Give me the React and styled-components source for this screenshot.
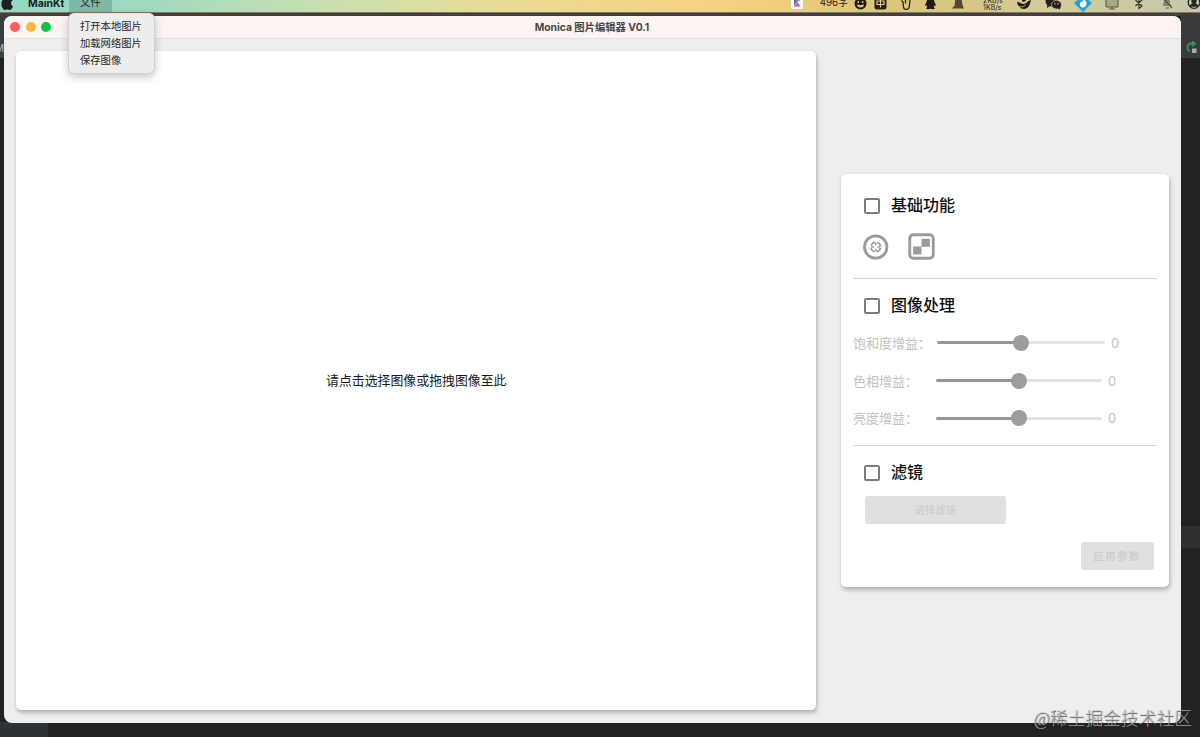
import React, { useState } from 'react';
import styled, { createGlobalStyle } from 'styled-components';

const GlobalStyle = createGlobalStyle`
  * {
    box-sizing: border-box;
  }
  body {
    margin: 0;
    overflow: hidden;
    font-family: Inter, "Noto Sans CJK SC", sans-serif;
  }
`;

const Desktop = styled.div`
  position: relative;
  width: 1200px;
  height: 737px;
  overflow: hidden;
  background:
    linear-gradient(#393a3c, #393a3c) 1181px 12px / 19px 46px no-repeat,
    linear-gradient(#2e3032, #2e3032) 1181px 526px / 19px 22px no-repeat,
    linear-gradient(#2f3436, #2b2f31) 0 722px / 48px 15px no-repeat,
    linear-gradient(#404042, #404042) 0 12px / 1200px 4px no-repeat,
    linear-gradient(#3c3d3f, #3c3d3f) 0 16px / 20px 42px no-repeat,
    #222222;
`;

const MenuBar = styled.div`
  display: flex;
  align-items: center;
  justify-content: space-between;
  height: 24px;
  margin-top: -12px;
  padding-top: 6px;
  background: linear-gradient(
    90deg,
    #91d8c4 0,
    #a2dbbf 160px,
    #bfdfb5 280px,
    #d8dfa5 400px,
    #ecda92 530px,
    #f5d384 700px,
    #eecf7c 780px,
    #dfc67b 860px,
    #d8c784 960px,
    #d2cc9c 1060px,
    #c4c8aa 1200px
  );
  box-shadow: 0 1px 0 #80755f;
  color: #1b1d1a;
`;

const AppMenus = styled.div`
  display: flex;
  align-items: center;
  height: 18px;
  padding-left: 1px;
  font-size: 10.4px;
`;

const AppName = styled.span`
  width: 56px;
  padding-left: 15px;
  font-weight: 700;
  white-space: nowrap;
`;

const MenuTitle = styled.span`
  display: flex;
  justify-content: center;
  width: 43px;
  height: 18px;
  line-height: 17px;
  background: #7fb9a6;
`;

const StatusItems = styled.div`
  display: grid;
  grid-template-columns: 26px 40px 20px 20px 32px 16px 40px 30px 32px 26px 34px 24px 30px 26px 28px;
  width: 416px;
  justify-items: center;
  align-items: center;
  font-size: 10px;

  svg {
    display: block;
  }
`;

const WordCount = styled.span`
  justify-self: end;
  padding-right: 2px;
  font-size: 9.8px;
  line-height: 14px;
  white-space: nowrap;
`;

const NetSpeed = styled.span`
  font-size: 7px;
  line-height: 7px;
  padding-top: 1px;
  white-space: nowrap;
`;

const DropMenu = styled.div`
  position: absolute;
  top: 13px;
  left: 68px;
  z-index: 3;
  display: flex;
  flex-direction: column;
  width: 87px;
  height: 61px;
  padding: 4px 11px;
  border: 1px solid #d0d0d0;
  border-top-color: #e4e4e4;
  border-radius: 6px;
  background: #ededed;
  box-shadow: 0 3px 9px rgba(0, 0, 0, 0.22);
`;

const DropItem = styled.div`
  height: 17.4px;
  color: #262626;
  font-size: 10.3px;
  line-height: 17px;
  white-space: nowrap;
`;

const Window = styled.div`
  position: absolute;
  top: 16px;
  left: 4px;
  display: flex;
  flex-direction: column;
  width: 1177px;
  height: 707px;
  border-radius: 8px;
  overflow: hidden;
  background: #eeeeee;
`;

const TitleBar = styled.div`
  display: grid;
  grid-template-columns: 1fr auto 1fr;
  align-items: center;
  height: 23px;
  padding-left: 6px;
  padding-right: 7px;
  border-bottom: 1px solid #e2dfdc;
  background: #fbf4f1;
`;

const Lights = styled.div`
  display: flex;
  gap: 5.7px;
`;

const Light = styled.span`
  width: 10px;
  height: 10px;
  border-radius: 50%;
  background: ${({ $color }) => $color};
`;

const Title = styled.span`
  color: #4b4745;
  font-size: 10.3px;
  font-weight: 700;
  line-height: 14px;
  white-space: nowrap;
`;

const Content = styled.div`
  display: flex;
  flex: 1;
  align-items: flex-start;
  gap: 25px;
  padding: 12px 12px 12px;
`;

const Card = styled.div`
  border-radius: 5px;
  background: #ffffff;
  box-shadow: 1px 3px 4px rgba(0, 0, 0, 0.25), 0 0 2px rgba(0, 0, 0, 0.08);
`;

const Canvas = styled(Card)`
  display: flex;
  align-items: center;
  justify-content: center;
  width: 799.5px;
  height: 659px;
  padding: 0 0 2px 1px;
  color: #1a1a1a;
  font-size: 12.9px;
`;

const Panel = styled(Card)`
  display: flex;
  flex-direction: column;
  width: 328px;
  height: 413px;
  margin-top: 123px;
  padding: 0 12px 0 12.5px;
`;

const Section = styled.section`
  height: ${({ $height }) => $height}px;
  padding-top: ${({ $top }) => $top}px;
  border-bottom: ${({ $last }) => ($last ? 'none' : '1px solid #d5d5d5')};
`;

const CheckRow = styled.label`
  display: flex;
  align-items: center;
  gap: 11px;
  height: 24px;
  padding-left: 11px;
  color: #111111;
  font-size: 16px;
  font-weight: 500;
`;

const CheckText = styled.span`
  padding-bottom: 2px;
`;

const Box = styled.input`
  appearance: none;
  width: 16px;
  height: 16px;
  margin: 1px 0 0;
  border: 2px solid #7c7c7c;
  border-radius: 2px;
  background: #ffffff;

  &:checked {
    background: #6a6a6a;
  }
`;

const Tools = styled.div`
  display: flex;
  align-items: center;
  gap: 18.5px;
  padding: 16px 0 0 10px;

  svg {
    display: block;
  }
`;

const SliderList = styled.div`
  padding-top: 7px;
`;

const SliderRow = styled.div`
  display: flex;
  align-items: center;
  height: 37.7px;
  color: #c2c2c2;
  font-size: 13px;
`;

const SliderLabel = styled.span`
  width: ${({ $wide }) => ($wide ? 84 : 83)}px;
  padding-bottom: 1px;
  white-space: nowrap;
`;

const Track = styled.div`
  position: relative;
  width: ${({ $wide }) => ($wide ? 168 : 166)}px;
  height: 3px;
  margin-right: 6px;
  border-radius: 2px;
  background: linear-gradient(90deg, #979797 50%, #e2e2e2 50%);
`;

const Thumb = styled.span`
  position: absolute;
  top: -6.5px;
  left: calc(50% - 8px);
  width: 16px;
  height: 16px;
  border-radius: 50%;
  background: #9d9d9d;
`;

const DisabledButton = styled.button`
  display: block;
  width: ${({ $width }) => $width}px;
  height: 28px;
  padding: 0 0 2px;
  border: none;
  border-radius: 3px;
  background: #e0e0e0;
  color: #cccccc;
  font-family: inherit;
  font-size: ${({ $size }) => $size}px;
  font-weight: 500;
  letter-spacing: ${({ $spacing }) => $spacing}px;
`;

const FilterBody = styled.div`
  padding: 12px 0 0 12px;
`;

const Footer = styled.div`
  display: flex;
  justify-content: flex-end;
  padding: 18px 3px 0 0;
`;

const Watermark = styled.div`
  position: absolute;
  right: 8px;
  bottom: 5px;
  z-index: 4;
  color: rgba(205, 205, 205, 0.72);
  font-family: "Liberation Serif", "Noto Sans CJK SC", serif;
  font-size: 17.8px;
  font-weight: 300;
  line-height: 26px;
  text-shadow: 0.5px 0.5px 1px rgba(40, 40, 40, 0.9);
  white-space: nowrap;
`;

const IdeText = styled.span`
  position: absolute;
  top: 42px;
  left: -5px;
  color: #bbbbbb;
  font-size: 10px;
`;

const RerunIcon = styled.svg`
  position: absolute;
  top: 41px;
  left: 1185px;
`;

const AppleIcon = () => (
  <svg width="12" height="15" viewBox="0 0 12 15" fill="#1c211f">
    <path d="M6 4C7 4 8 3 9.4 3c1 0 1.9.5 2.4 1.300C9.300 5.800 9.700 9.200 12 10.200 11.300 12.200 10 14 8.800 14 7.800 14 7.300 13.400 6.300 13.400S4.800 14 3.800 14C2.200 14 .4 11 .4 7.800.4 4.700 2 3 3.700 3 4.700 3 5.400 4 6 4Z" />
    <path d="M6 3C6 1.500 7.200.3 8.600.1 8.700 1.700 7.500 3 6 3Z" />
  </svg>
);

const StatusIcons = () => (
  <StatusItems>
    <svg width="14" height="16" viewBox="0 0 14 16">
      <rect x="1" y="1" width="12" height="13" rx="2" fill="#fff" />
      <path d="M4 3h6L4 11Z" fill="#4d75cf" />
      <path d="M4 11.500 7.500 7l3 4.500Z" fill="#d55278" />
      <path d="M7 7 10 3v3Z" fill="#f08b3e" />
    </svg>
    <WordCount>496字</WordCount>
    <svg width="13" height="13" viewBox="0 0 13 13">
      <circle cx="6.500" cy="6.500" r="6" fill="#1e1c14" />
      <circle cx="4.300" cy="5" r="1" fill="#d8c27a" />
      <circle cx="8.700" cy="5" r="1" fill="#d8c27a" />
      <path d="M3 7.300c1.500 1 5.500 1 7 0a3.500 3.300 0 0 1-7 0Z" fill="#d8c27a" />
    </svg>
    <svg width="13" height="13" viewBox="0 0 13 13">
      <rect x=".5" y="0" width="12" height="12.500" rx="2" fill="#24221a" />
      <path d="M3 4h7v3.500H3ZM6.500 2v8.500" fill="none" stroke="#dfcb87" strokeWidth="1.200" />
    </svg>
    <svg width="12" height="15" viewBox="0 0 12 15" fill="none" stroke="#24221a" strokeWidth="1.300">
      <path d="M1.500 4.500 3 6l.5 5c.4 3.400 5.400 3.200 5.800-.5L10.200 2M5.500 3v4.500" />
    </svg>
    <svg width="13" height="14" viewBox="0 0 13 14" fill="#1d1b15">
      <path d="M3 4c0-5 7-5 7 0 0 2 2 4 2 6l-1.500-.7-.7 2 1.200 1.200c-1 1-3 .7-4.500.3-1.500.4-3.500.700-4.500-.3l1.200-1.200-.7-2L1 10c0-2 2-4 2-6Z" />
    </svg>
    <svg width="14" height="14" viewBox="0 0 14 14" fill="#4d4933">
      <path d="M4.500 1 10 0l1.500 9 1.500 3.500H.5L3.500 10Z" />
    </svg>
    <NetSpeed>
      2KB/s
      <br />
      1KB/s
    </NetSpeed>
    <svg width="16" height="14" viewBox="0 0 16 14" fill="#1d1b15">
      <path d="M1 6c3 0 4 2 7 2 2 0 3-3 7-4-1 5-3 9-7 9-4 0-6-3-7-7Z" />
      <path d="M6 5c0-2 3-3 5-4 0 3-2 5-4 5Z" />
      <path d="M3 10.500c3 1 5 0 7-2" fill="none" stroke="#d5c98d" strokeWidth=".8" />
    </svg>
    <svg width="17" height="14" viewBox="0 0 17 14" fill="#25211a">
      <ellipse cx="6.500" cy="5.500" rx="6" ry="5" />
      <path d="m2 9 0 3 3-2Z" />
      <ellipse cx="11.500" cy="8.700" rx="5" ry="4.300" stroke="#d2cb98" strokeWidth=".7" />
      <path d="m12 12 3 1.500.5-3Z" />
      <circle cx="10" cy="7.700" r=".7" fill="#d2cb98" />
      <circle cx="13" cy="7.700" r=".7" fill="#d2cb98" />
    </svg>
    <svg width="18" height="17" viewBox="0 0 18 17">
      <path d="M9 0 18 8 9 17 0 8Z" fill="#22a1dc" />
      <path d="M9.500 2c0 3 3.500 4 3 7-.4 2.500-2 3.500-3.500 3.500-2 0-3.500-1.500-3-4 .2-1 .7-1.800 1.200-2.300L8 7.500c1-1.500 1.500-3.500 1.500-5.500Z" fill="#fff" />
    </svg>
    <svg width="14" height="13" viewBox="0 0 14 13" fill="#aaa985" stroke="#555746" strokeWidth="1.100">
      <rect x="1" y="0" width="12" height="10" rx="1" />
      <path d="M4 12h6M7 10v2" />
    </svg>
    <svg width="10" height="14" viewBox="0 0 10 14" fill="none" stroke="#30332c" strokeWidth="1.200">
      <path d="M1.500 4 8 10 5 12.500V1.500L8 4 1.500 10" />
    </svg>
    <svg width="13" height="14" viewBox="0 0 13 14">
      <path d="M3 4c0-4 6-4 6 0v4l2 2H2Z" fill="#81846e" />
      <path d="m2 2 9 10M5 12h3" stroke="#50534a" strokeWidth="1.200" />
    </svg>
    <svg width="14" height="14" viewBox="0 0 14 14" fill="none" stroke="#24271f" strokeWidth="1.300">
      <circle cx="7" cy="6.500" r="5.800" />
      <circle cx="7" cy="5" r="2" fill="#24271f" />
      <path d="M3.500 10c1-3 6-3 7 0Z" fill="#24271f" />
    </svg>
  </StatusItems>
);

const LensIcon = () => (
  <svg width="26" height="26" viewBox="0 0 26 26" fill="none" stroke="#9b9b9b">
    <circle cx="12.700" cy="13" r="11.200" strokeWidth="2.800" />
    <circle cx="12.700" cy="13" r="4.800" strokeWidth="1.600" strokeDasharray="5.540 2" strokeDashoffset="-1" />
    <path d="M12.700 8.500v2.800M12.700 14.700v2.800M8.200 13H11M14.400 13h2.800" strokeWidth="1.600" />
  </svg>
);

const MosaicIcon = () => (
  <svg width="27" height="27" viewBox="0 0 28 28" fill="#9b9b9b">
    <rect x="1.800" y="1.800" width="24.400" height="24.400" rx="3.800" fill="none" stroke="#9b9b9b" strokeWidth="3" />
    <rect x="14" y="6" width="8.700" height="8.300" />
    <rect x="5.300" y="14" width="8.700" height="8.300" />
  </svg>
);

const menuItems = ['打开本地图片', '加载网络图片', '保存图像'];

const sliders = [
  { label: '饱和度增益：', value: 0, wide: true },
  { label: '色相增益：', value: 0 },
  { label: '亮度增益：', value: 0 },
];

const CheckTitle = ({ children }) => {
  const [checked, setChecked] = useState(false);

  return (
    <CheckRow>
      <Box type="checkbox" checked={checked} onChange={(e) => setChecked(e.target.checked)} />
      <CheckText>{children}</CheckText>
    </CheckRow>
  );
};

const ControlPanel = () => (
  <Panel>
    <Section $height={105} $top={19}>
      <CheckTitle>基础功能</CheckTitle>
      <Tools>
        <LensIcon />
        <MosaicIcon />
      </Tools>
    </Section>
    <Section $height={167} $top={14}>
      <CheckTitle>图像处理</CheckTitle>
      <SliderList>
        {sliders.map(({ label, value, wide }) => (
          <SliderRow key={label}>
            <SliderLabel $wide={wide}>{label}</SliderLabel>
            <Track $wide={wide}>
              <Thumb />
            </Track>
            {value}
          </SliderRow>
        ))}
      </SliderList>
    </Section>
    <Section $height={140} $top={14} $last>
      <CheckTitle>滤镜</CheckTitle>
      <FilterBody>
        <DisabledButton disabled $width={141} $size={10} $spacing={0.2}>选择滤镜</DisabledButton>
      </FilterBody>
      <Footer>
        <DisabledButton disabled $width={73} $size={10.5} $spacing={1.4}>应用参数</DisabledButton>
      </Footer>
    </Section>
  </Panel>
);

const App = () => (
  <>
    <GlobalStyle />
    <Desktop>
      <MenuBar>
        <AppMenus>
          <AppleIcon />
          <AppName>MainKt</AppName>
          <MenuTitle>文件</MenuTitle>
        </AppMenus>
        <StatusIcons />
      </MenuBar>
      <IdeText>M</IdeText>
      <RerunIcon width="13" height="13" viewBox="0 0 13 13">
        <path d="M8 2.500H6a4 4 0 0 0-1 7.700M7 0l3 2.500L7 5" fill="none" stroke="#38915a" strokeWidth="1.800" />
        <rect x="7" y="7.500" width="4.500" height="4.500" fill="#aaaaaa" />
      </RerunIcon>
      <Window>
        <TitleBar>
          <Lights>
            <Light $color="#fb5d60" />
            <Light $color="#f6b944" />
            <Light $color="#13c14b" />
          </Lights>
          <Title>Monica 图片编辑器 V0.1</Title>
        </TitleBar>
        <Content>
          <Canvas>请点击选择图像或拖拽图像至此</Canvas>
          <ControlPanel />
        </Content>
      </Window>
      <DropMenu>
        {menuItems.map((item) => (
          <DropItem key={item}>{item}</DropItem>
        ))}
      </DropMenu>
      <Watermark>@稀土掘金技术社区</Watermark>
    </Desktop>
  </>
);

export default App;
